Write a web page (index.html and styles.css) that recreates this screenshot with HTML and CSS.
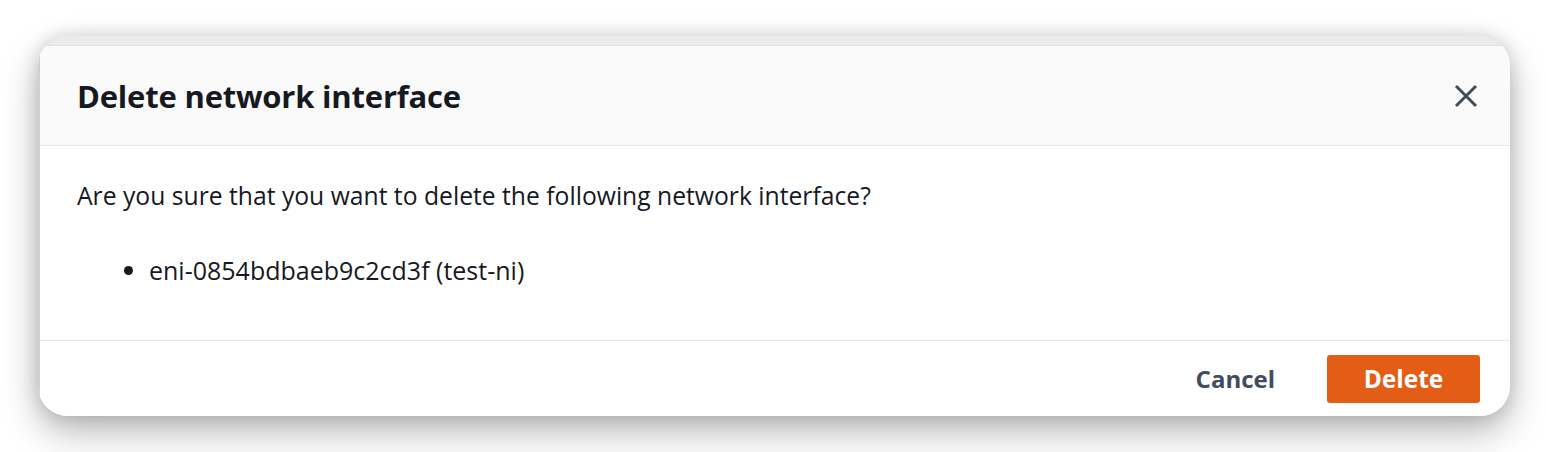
FILE: index.html
```html
<!DOCTYPE html>
<html>
<head>
<meta charset="utf-8">
<link rel="stylesheet" href="styles.css">
</head>
<body>
<div class="frame">
<div class="window">
  <div class="modal">
    <div class="modal-header">
      <h2 class="title">Delete network interface</h2>
      <button class="close" aria-label="Close">
        <svg width="24" height="24" viewBox="0 0 24 24"><path d="M2 2 L22 22 M22 2 L2 22" stroke="#414d5c" stroke-width="3" fill="none"/></svg>
      </button>
    </div>
    <div class="modal-body">
      <p class="question">Are you sure that you want to delete the following network interface?</p>
      <ul class="items">
        <li>eni-0854bdbaeb9c2cd3f (test-ni)</li>
      </ul>
    </div>
    <div class="modal-footer">
      <button class="btn-link">Cancel</button>
      <button class="btn-primary">Delete</button>
    </div>
  </div>
</div>
</div>
</body>
</html>
```
FILE: styles.css
```css
html, body {
  margin: 0;
  padding: 0;
  background: #ffffff;
}
body {
  font-family: "Open Sans", "Noto Sans", sans-serif;
  color: #16191f;
  height: 452px;
}
.frame {
  padding: 36px 0 0 38px;
}
.window {
  width: 1472px;
  height: 380px;
  box-sizing: border-box;
  border-radius: 30px;
  overflow: hidden;
  background: #ebebeb;
  padding-top: 9px;
  box-shadow: 0 16px 36px rgba(0,0,0,0.28), 0 0 18px rgba(0,0,0,0.14);
  display: flex;
  flex-direction: column;
}
.modal {
  flex: 1;
  display: flex;
  flex-direction: column;
  background: #ffffff;
  border-top: 1px solid #e0e0e0;
  border-left: 2px solid #cfcfcf;
}
.modal-header {
  height: 100px;
  box-sizing: border-box;
  background: #fafafa;
  border-bottom: 1px solid #e6e7e8;
  display: flex;
  align-items: center;
  justify-content: space-between;
  padding: 0 32px 0 37px;
}
.title {
  margin: 0;
  font-size: 31px;
  font-weight: 700;
  letter-spacing: -0.2px;
  color: #16191f;
}
.close {
  background: none;
  border: 0;
  padding: 0;
  width: 24px;
  height: 24px;
  display: flex;
}
.modal-body {
  height: 195px;
  box-sizing: border-box;
  border-bottom: 1px solid #e6e7e8;
  padding: 0 37px;
}
.question {
  margin: 0;
  padding-top: 34px;
  font-size: 24.7px;
  line-height: 32px;
}
.items {
  margin: 42px 0 0 0;
  padding-left: 72px;
  font-size: 25px;
  line-height: 32px;
}
.modal-footer {
  flex: 1;
  display: flex;
  align-items: center;
  justify-content: flex-end;
  gap: 52px;
  padding: 0 30px 0 0;
}
.btn-link {
  background: none;
  border: 0;
  font-family: inherit;
  font-weight: 700;
  font-size: 24px;
  color: #414d5c;
  padding: 0;
}
.btn-primary {
  background: #e35d17;
  border: 0;
  border-radius: 3px;
  width: 153px;
  height: 48px;
  font-family: inherit;
  font-weight: 700;
  font-size: 24.5px;
  color: #ffffff;
}
```
